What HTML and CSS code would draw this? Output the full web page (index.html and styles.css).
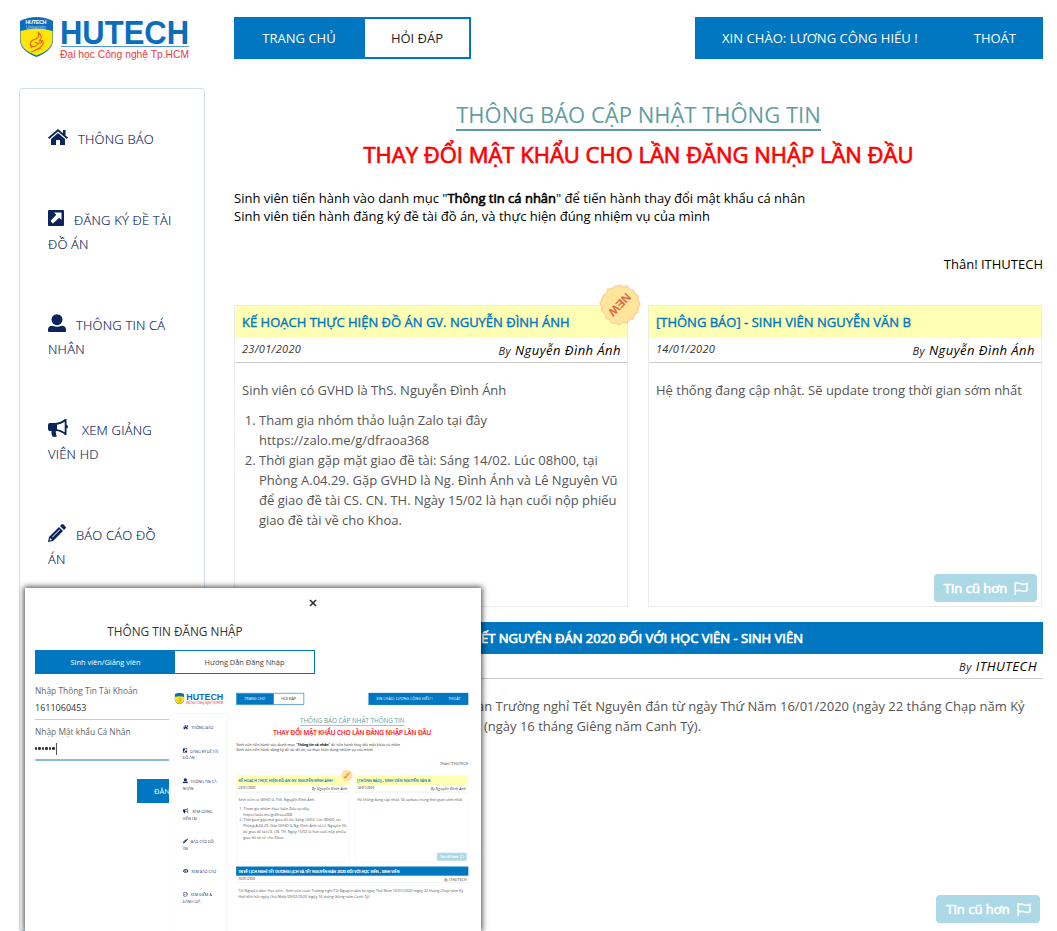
FILE: index.html
```html
<!DOCTYPE html>
<html lang="vi">
<head>
<meta charset="utf-8">
<title>HUTECH</title>
<link rel="stylesheet" href="styles.css">
</head>
<body>
<svg class="defs" aria-hidden="true">
  <symbol id="shield" viewBox="0 0 35 41">
    <path fill="#0a6ebd" d="M1 4Q9 0 17.500 0Q26 0 34 4V24Q33 34 17.500 40Q2 34 1 24Z"/>
    <path fill="#ffe60a" d="M1.500 14Q9 11.500 17.500 11.500Q26 11.500 33.500 14V23Q33 33 17.500 38.500Q2 33 1.500 23Z"/>
    <g fill="none" stroke="#e8641b" stroke-width="1.100">
      <path d="M13 31Q9 26 14 23Q22 21 19 15Q25 20 20 24Q25 22 24 27Q22 31 16 33"/>
      <path d="M11 27Q15 33 20 26M16 25Q20 28 24 24M12 35L22 31"/>
    </g>
  </symbol>
  <symbol id="home" viewBox="0 0 20 16"><path d="M10 0L15 4.300V1h2.500v5.500L20 8.600l-1.200 1.300L10 2.400 1.200 9.900 0 8.600z"/><path d="M10 4l7 6v6h-5v-5H8v5H3v-6z"/></symbol>
  <symbol id="share" viewBox="0 0 16 16"><path fill-rule="evenodd" d="M1 0h14A1 1 0 0 1 16 1v14a1 1 0 0 1-1 1h-14A1 1 0 0 1 0 15v-14A1 1 0 0 1 1 0zM6 2.500l2.300 2.300-5.800 6.300 2.400 2.400 6.300-5.800 2.300 2.300V2.500z"/></symbol>
  <symbol id="user" viewBox="0 0 18 18"><circle cx="9" cy="5.700" r="5.500"/><path d="M0 18v-2.500Q0 12 4.500 11.700Q9 14 13.500 11.700Q18 12 18 15.500V17q0 1-1 1H1q-1 0-1-1z"/></symbol>
  <symbol id="horn" viewBox="0 0 20 18"><path fill-rule="evenodd" d="M17 0h1.500v6q1.500.3 1.500 1.800T18.500 9.500V16H17Q13 12.300 8 12q-.7 1.500.3 2.500Q7.500 15.500 9 17q-2 1.500-4.500.5Q3 14.500 3.700 12H2q-2 0-2-2V6q0-2 2-2h5q6-.5 10-4zm-.3 2.800Q13 5.300 9 5.700v4.600q4 .4 7.700 2.900z"/></symbol>
  <symbol id="pencil" viewBox="0 0 18 18"><path fill-rule="evenodd" d="M13.500.6q1-1 2 0l1.900 1.900q1 1 0 2L16 6l-4-4zM11 3l4 4L5 17l-5 1 1-5zM2 14l-.4 2.500L4 16zm9.500-8.500L4 13l.5.500L12 6z"/></symbol>
  <symbol id="eye" viewBox="0 0 20 16"><path fill-rule="evenodd" d="M0 8Q10-6 20 8Q10 22 0 8zm10-4.500a4.500 4.500 0 1 0 .1 0z"/><circle cx="10" cy="8" r="2.500"/></symbol>
  <symbol id="check" viewBox="0 0 18 18"><g fill="none" stroke="currentColor" stroke-width="1.800"><circle cx="8.500" cy="9" r="7.500"/><path d="M5 8.500l3.500 3.500L16 4"/></g></symbol>
  <symbol id="flag" viewBox="0 0 14 13"><path fill="none" stroke="currentColor" stroke-width="1.500" d="M1.200 0v13M1.200 1.500Q4 .5 7 1.700T13 1.500V8.800Q10.500 10 7.500 8.900T1.200 9"/></symbol>
  <symbol id="burst" viewBox="0 0 44 44">
    <path fill="#ffe69a" stroke="#fbd3a0" stroke-width="1.500" d="M22 2Q25 5 29 3Q31 7 35 7Q36 11 40 13Q39 17 42 21Q39 25 40 29Q36 31 35 36Q31 36 29 40Q25 38 21 42Q18 39 14 40Q12 36 8 35Q8 31 4 28Q5 24 2 20Q5 17 5 13Q9 11 10 6Q14 7 17 3Q20 4 22 2Z"/>
    <text x="22" y="26.500" transform="rotate(134 22 22)" class="burst-text">NEW</text>
  </symbol>
</svg>

<div class="page">
  <header class="top">
    <div class="logo"><svg class="shield"><use href="#shield"/></svg><svg class="wordmark" viewBox="0 0 130 44"><text class="shield-text" x="-34.500" y="7" textLength="21">HUTECH</text><text class="shield-sub" x="-34" y="11.500" textLength="20">University</text><text class="brand" x="0" y="26.500" textLength="129" lengthAdjust="spacingAndGlyphs">HUTECH</text><path stroke="#4f9bd6" d="M1 29.500H129"/><text class="tagline" x="0" y="40.500" textLength="129" lengthAdjust="spacingAndGlyphs">Đại học Công nghệ Tp.HCM</text></svg></div>
    <nav class="menu"><a class="tab on">TRANG CHỦ</a><a class="tab off">HỎI ĐÁP</a></nav>
    <div class="account"><span class="hello">XIN CHÀO: LƯƠNG CÔNG HIẾU !</span><span>THOÁT</span></div>
  </header>
  <div class="columns">
    <aside class="side">
      <p class="item"><svg class="ic home"><use href="#home"/></svg>THÔNG BÁO</p>
      <p class="item"><svg class="ic share"><use href="#share"/></svg>ĐĂNG KÝ ĐỀ TÀI<br>ĐỒ ÁN</p>
      <p class="item"><svg class="ic user"><use href="#user"/></svg>THÔNG TIN CÁ<br>NHÂN</p>
      <p class="item"><svg class="ic horn"><use href="#horn"/></svg>XEM GIẢNG<br>VIÊN HD</p>
      <p class="item"><svg class="ic pencil"><use href="#pencil"/></svg>BÁO CÁO ĐỒ<br>ÁN</p>
    </aside>
    <main class="main">
      <h1 class="title"><span>THÔNG BÁO CẬP NHẬT THÔNG TIN</span></h1>
      <h2 class="subtitle">THAY ĐỔI MẬT KHẨU CHO LẦN ĐĂNG NHẬP LẦN ĐẦU</h2>
      <p class="intro">Sinh viên tiến hành vào danh mục "<b>Thông tin cá nhân</b>" để tiến hành thay đổi mật khẩu cá nhân<br>Sinh viên tiến hành đăng ký đề tài đồ án, và thực hiện đúng nhiệm vụ của mình</p>
      <p class="sign">Thân! ITHUTECH</p>
      <div class="cards">
        <article class="card">
          <svg class="burst"><use href="#burst"/></svg>
          <h3 class="card-title">KẾ HOẠCH THỰC HIỆN ĐỒ ÁN GV. NGUYỄN ĐÌNH ÁNH</h3>
          <div class="meta"><time>23/01/2020</time><span class="by"><small>By</small> Nguyễn Đình Ánh</span></div>
          <div class="text"><p>Sinh viên có GVHD là ThS. Nguyễn Đình Ánh</p>
            <ol><li>Tham gia nhóm thảo luận Zalo tại đây<br>https://zalo.me/g/dfraoa368</li><li>Thời gian gặp mặt giao đề tài: Sáng 14/02. Lúc 08h00, tại<br>Phòng A.04.29. Gặp GVHD là Ng. Đình Ánh và Lê Nguyên Vũ<br>để giao đề tài CS. CN. TH. Ngày 15/02 là hạn cuối nộp phiếu<br>giao đề tài về cho Khoa.</li></ol></div>
        </article>
        <article class="card">
          <h3 class="card-title">[THÔNG BÁO] - SINH VIÊN NGUYỄN VĂN B</h3>
          <div class="meta"><time>14/01/2020</time><span class="by"><small>By</small> Nguyễn Đình Ánh</span></div>
          <div class="text"><p>Hệ thống đang cập nhật. Sẽ update trong thời gian sớm nhất</p></div>
          <a class="older">Tin cũ hơn<svg class="flag"><use href="#flag"/></svg></a>
        </article>
      </div>
      <article class="wide">
        <h3 class="wide-title">TB VỀ LỊCH NGHỈ TẾT DƯƠNG LỊCH VÀ TẾT NGUYÊN ĐÁN 2020 ĐỐI VỚI HỌC VIÊN - SINH VIÊN</h3>
        <div class="meta"><time>16/01/2020</time><span class="by"><small>By</small> ITHUTECH</span></div>
        <div class="text"><p>Tết Nguyên đán: Học viên - Sinh viên toàn Trường nghỉ Tết Nguyên đán từ ngày Thứ Năm 16/01/2020 (ngày 22 tháng Chạp năm Kỷ<br>Hợi) đến hết ngày Chủ Nhật 09/02/2020 (ngày 16 tháng Giêng năm Canh Tý).</p></div>
        <a class="older">Tin cũ hơn<svg class="flag"><use href="#flag"/></svg></a>
      </article>
    </main>
  </div>
</div>

<section class="login">
  <svg class="close" viewBox="0 0 8 8"><path d="M1 1L7 7M7 1L1 7"/></svg>
  <h2 class="login-title">THÔNG TIN ĐĂNG NHẬP</h2>
  <div class="login-tabs"><span class="lt on">Sinh viên/Giảng viên</span><span class="lt">Hướng Dẫn Đăng Nhập</span></div>
  <div class="form">
    <label>Nhập Thông Tin Tài Khoản</label>
    <div class="field">1611060453</div>
    <label>Nhập Mật khẩu Cá Nhân</label>
    <div class="field active"><i></i><i></i><i></i><i></i><i></i><i></i><b></b></div>
    <div class="submit">ĐĂNG NHẬP</div>
  </div>
  <div class="preview">
    <div class="page mini">
      <header class="top">
        <div class="logo"><svg class="shield"><use href="#shield"/></svg><svg class="wordmark" viewBox="0 0 130 44"><text class="brand" x="0" y="26.500" textLength="129" lengthAdjust="spacingAndGlyphs">HUTECH</text><path stroke="#4f9bd6" d="M1 29.500H129"/><text class="tagline" x="0" y="40.500" textLength="129" lengthAdjust="spacingAndGlyphs">Đại học Công nghệ Tp.HCM</text></svg></div>
        <nav class="menu"><a class="tab on">TRANG CHỦ</a><a class="tab off">HỎI ĐÁP</a></nav>
        <div class="account"><span class="hello">XIN CHÀO: LƯƠNG CÔNG HIẾU !</span><span>THOÁT</span></div>
      </header>
      <div class="columns">
        <aside class="side">
          <p class="item"><svg class="ic home"><use href="#home"/></svg>THÔNG BÁO</p>
          <p class="item"><svg class="ic share"><use href="#share"/></svg>ĐĂNG KÝ ĐỀ TÀI<br>ĐỒ ÁN</p>
          <p class="item"><svg class="ic user"><use href="#user"/></svg>THÔNG TIN CÁ<br>NHÂN</p>
          <p class="item"><svg class="ic horn"><use href="#horn"/></svg>XEM GIẢNG<br>VIÊN HD</p>
          <p class="item"><svg class="ic pencil"><use href="#pencil"/></svg>BÁO CÁO ĐỒ<br>ÁN</p>
          <p class="item"><svg class="ic home"><use href="#eye"/></svg>XEM BÁO CÁO</p>
          <p class="item"><svg class="ic user"><use href="#check"/></svg>XEM ĐIỂM &amp;<br>ĐÁNH GIÁ</p>
        </aside>
        <div class="main">
          <h1 class="title"><span>THÔNG BÁO CẬP NHẬT THÔNG TIN</span></h1>
          <h2 class="subtitle">THAY ĐỔI MẬT KHẨU CHO LẦN ĐĂNG NHẬP LẦN ĐẦU</h2>
          <p class="intro">Sinh viên tiến hành vào danh mục "<b>Thông tin cá nhân</b>" để tiến hành thay đổi mật khẩu cá nhân<br>Sinh viên tiến hành đăng ký đề tài đồ án, và thực hiện đúng nhiệm vụ của mình</p>
          <p class="sign">Thân! ITHUTECH</p>
          <div class="cards">
            <article class="card">
              <svg class="burst"><use href="#burst"/></svg>
              <h3 class="card-title">KẾ HOẠCH THỰC HIỆN ĐỒ ÁN GV. NGUYỄN ĐÌNH ÁNH</h3>
              <div class="meta"><time>23/01/2020</time><span class="by"><small>By</small> Nguyễn Đình Ánh</span></div>
              <div class="text"><p>Sinh viên có GVHD là ThS. Nguyễn Đình Ánh</p>
                <ol><li>Tham gia nhóm thảo luận Zalo tại đây<br>https://zalo.me/g/dfraoa368</li><li>Thời gian gặp mặt giao đề tài: Sáng 14/02. Lúc 08h00, tại<br>Phòng A.04.29. Gặp GVHD là Ng. Đình Ánh và Lê Nguyên Vũ<br>để giao đề tài CS. CN. TH. Ngày 15/02 là hạn cuối nộp phiếu<br>giao đề tài về cho Khoa.</li></ol></div>
            </article>
            <article class="card">
              <h3 class="card-title">[THÔNG BÁO] - SINH VIÊN NGUYỄN VĂN B</h3>
              <div class="meta"><time>14/01/2020</time><span class="by"><small>By</small> Nguyễn Đình Ánh</span></div>
              <div class="text"><p>Hệ thống đang cập nhật. Sẽ update trong thời gian sớm nhất</p></div>
              <a class="older">Tin cũ hơn<svg class="flag"><use href="#flag"/></svg></a>
            </article>
          </div>
          <article class="wide">
            <h3 class="wide-title">TB VỀ LỊCH NGHỈ TẾT DƯƠNG LỊCH VÀ TẾT NGUYÊN ĐÁN 2020 ĐỐI VỚI HỌC VIÊN - SINH VIÊN</h3>
            <div class="meta"><time>16/01/2020</time><span class="by"><small>By</small> ITHUTECH</span></div>
            <div class="text"><p>Tết Nguyên đán: Học viên - Sinh viên toàn Trường nghỉ Tết Nguyên đán từ ngày Thứ Năm 16/01/2020 (ngày 22 tháng Chạp năm Kỷ<br>Hợi) đến hết ngày Chủ Nhật 09/02/2020 (ngày 16 tháng Giêng năm Canh Tý).</p></div>
          </article>
        </div>
      </div>
    </div>
  </div>
</section>
</body>
</html>
```

FILE: styles.css
```css
* { box-sizing: border-box; }
html { height: 931px; overflow: hidden; }
body { margin: 0; width: 1057px; height: 931px; overflow: hidden; position: relative; background: #fff; font-family: "Open Sans", sans-serif; font-size: 13px; color: #000; }
h1, h2, h3, p, ol { margin: 0; padding: 0; font-weight: 400; }
svg { overflow: visible; fill: currentColor; }
.defs { position: absolute; width: 0; height: 0; }

.page { width: 1057px; height: 931px; overflow: hidden; padding: 17px 14px 0 19px; background: #fff; }
.top { display: flex; height: 42px; }
.logo { display: flex; width: 215px; gap: 6px; flex: none; }
.shield { width: 35px; height: 41px; }
.wordmark { width: 130px; height: 44px; }
.brand { font: 700 33.500px "Liberation Sans", Arial, sans-serif; fill: #0a6ebd; }
.tagline { font: 11px "Liberation Sans", Arial, sans-serif; fill: #f0383c; }
.shield-text { font: 700 5.500px "Liberation Sans", sans-serif; fill: #fff; }
.shield-sub { font: 4.500px "Liberation Sans", sans-serif; fill: #b5d5ee; }
.menu { display: flex; width: 237px; border: 2px solid #0077c0; }
.tab { line-height: 38px; text-align: center; }
.tab.on { width: 129px; padding-right: 3px; background: #0077c0; color: #fff; }
.tab.off { flex: 1; color: #222; }
.account { margin-left: auto; width: 348px; background: #0077c0; color: #fff; display: flex; justify-content: space-between; padding: 0 27px; line-height: 42px; }
.hello { letter-spacing: .05px; }

.columns { display: flex; margin-top: 29px; height: 843px; }
.side { width: 186px; margin-right: 29px; border: 1px solid #d5dfe7; border-radius: 3px; padding: 38px 0 0 28px; flex: none; color: #0b2459; display: flex; flex-direction: column; gap: 57px; }
.item { line-height: 24px; font-weight: 300; white-space: nowrap; letter-spacing: .2px; -webkit-text-stroke: .15px #0b2459; }
.ic { vertical-align: -1px; -webkit-text-stroke: 0; }
.ic.home { width: 20px; height: 16px; margin-right: 10px; }
.ic.share { width: 16px; height: 16px; margin-right: 10px; }
.ic.user, .ic.pencil { width: 18px; height: 18px; margin-right: 10px; vertical-align: -2px; }
.ic.horn { width: 20px; height: 18px; margin-right: 14px; vertical-align: -2px; }

.main { width: 809px; flex: none; }
.title { text-align: center; height: 43px; padding-top: 11px; font-size: 22px; line-height: 30px; color: #5f9ea0; }
.title span { display: inline-block; height: 32px; border-bottom: 2px solid #5f9ea0; }
.subtitle { text-align: center; height: 57px; padding-top: 6px; line-height: 34px; font-size: 22px; color: #f00; -webkit-text-stroke: .7px #f00; }
.intro { line-height: 18px; height: 66px; padding-top: 1px; white-space: nowrap; }
.intro b { font-weight: 400; -webkit-text-stroke: .6px #000; }
.sign { text-align: right; line-height: 20px; height: 51px; }
.cards { display: grid; grid-template-columns: 394px 394px; gap: 20px; height: 302px; }
.card { position: relative; border: 1px solid #ebebeb; }
.card-title { height: 32px; line-height: 33px; padding-left: 7px; background: #ffffb3; color: #0077c0; font-size: 13px; -webkit-text-stroke: .4px #0077c0; white-space: nowrap; }
.meta { display: flex; justify-content: space-between; height: 25px; border-bottom: 1px solid #ccc; padding: 0 6px 0 7px; font-style: italic; line-height: 25px; }
.meta time { font-size: 11px; color: #333; line-height: 22px; letter-spacing: .3px; }
.meta small { font-size: 11px; color: #222; }
.card .by { letter-spacing: .45px; }
.wide .by { letter-spacing: .5px; }
.text { padding: 17px 0 0 7px; line-height: 20px; color: #555; white-space: nowrap; }
.text ol { margin-top: 10px; padding-left: 17px; }
.burst { position: absolute; left: 363px; top: -23px; width: 44px; height: 44px; }
.burst-text { font: 700 11.500px "Liberation Sans", sans-serif; fill: #d9694a; text-anchor: middle; }
.older { position: absolute; right: 4px; bottom: 4px; width: 103px; height: 28px; border-radius: 4px; background: #add8e6; color: #fff; display: flex; align-items: center; justify-content: center; gap: 7px; padding-left: 1px; -webkit-text-stroke: .6px #fff; }
.flag { width: 14px; height: 13px; -webkit-text-stroke: 0; }
.wide { position: relative; margin-top: 15px; height: 305px; }
.wide .older { right: 3px; width: 104px; }
.wide-title { height: 32px; line-height: 32px; padding-left: 7px; background: #0077c0; color: #fff; font-size: 13px; -webkit-text-stroke: .7px #fff; white-space: nowrap; }

.login { position: absolute; left: 25px; top: 588px; width: 456px; height: 343px; background: #fff; box-shadow: 0 0 6px 1px rgba(0,0,0,.75); padding-left: 10px; }
.close { position: absolute; left: 284px; top: 11px; width: 8px; height: 8px; fill: none; stroke: #333; stroke-width: 1.700; }
.login-title { width: 280px; text-align: center; padding-top: 34px; height: 62px; line-height: 18px; font-size: 11.800px; color: #333; }
.login-tabs { display: flex; width: 280px; height: 24px; border: 1px solid #0077c0; }
.lt { flex: 1; text-align: center; font-size: 7.400px; line-height: 22px; color: #444; }
.lt.on { background: #0077c0; color: #fff; }
.form { width: 134px; overflow: hidden; padding-top: 11px; display: flex; flex-direction: column; }
.form label { font-size: 8.400px; line-height: 12px; color: #666; white-space: nowrap; }
.field { height: 23px; line-height: 22px; font-size: 9px; color: #333; border-bottom: 1px solid #ccc; margin-bottom: 6px; }
.field.active { display: flex; align-items: center; gap: 1.300px; border-bottom: 2px solid #8abdd9; margin-bottom: 18px; }
.field i { width: 2.200px; height: 2.200px; border-radius: 50%; background: #333; }
.field b { width: 1px; height: 12px; background: #555; }
.submit { width: 62px; height: 24px; margin-left: 102px; padding-left: 17px; background: #0077c0; color: #fff; font-size: 7.500px; line-height: 24px; white-space: nowrap; }
.preview { position: absolute; left: 144px; top: 99.600px; width: 304px; height: 243px; overflow: hidden; }
.mini { height: 847px; transform: scale(.287); transform-origin: 0 0; color: #333; }
.mini .columns { height: 759px; }
.mini .side { border-bottom: 0; }
.mini .wide { height: 120px; }
.mini .item { -webkit-text-stroke: .3px #0b2459; }
```
